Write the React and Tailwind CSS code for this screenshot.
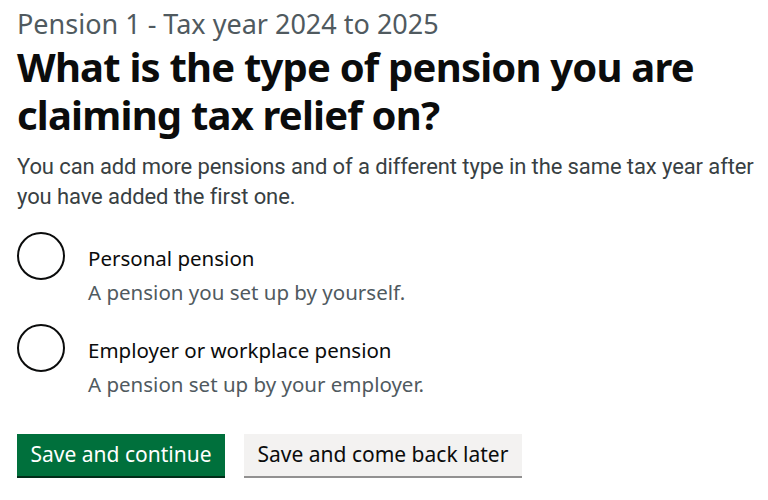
import React, { useState } from 'react';

const options = [
  { value: 'personal', label: 'Personal pension', hint: 'A pension you set up by yourself.' },
  { value: 'workplace', label: 'Employer or workplace pension', hint: 'A pension set up by your employer.' },
];

const App = () => {
  const [type, setType] = useState('');

  return (
    <div className="bg-white min-h-[500px] pl-[17px] pr-[8px] pt-[10px] text-[#0b0c0c] font-['Noto_Sans',sans-serif]">
      <span className="block text-[27px] leading-[28px] text-[#505a5f]">Pension 1 - Tax year 2024 to 2025</span>
      <h1 className="text-[40px] leading-[48px] font-bold tracking-[-0.8px] mt-[5px]">
        What is the type of pension you are claiming tax relief on?
      </h1>
      <p className="text-[22px] leading-[30px] text-[#383f43] mt-[13px] tracking-[-0.1px] font-['Roboto',sans-serif]">
        You can add more pensions and of a different type in the same tax year after you have added the first one.
      </p>

      <div className="mt-[20px] flex flex-col gap-[44px]">
        {options.map((o) => (
          <label key={o.value} className="flex gap-[23px] cursor-pointer">
            <input
              type="radio"
              name="type"
              value={o.value}
              checked={type === o.value}
              onChange={() => setType(o.value)}
              className="sr-only"
            />
            <span className="w-[48px] h-[48px] shrink-0 rounded-full border-2 border-[#0b0c0c] flex items-center justify-center">
              {type === o.value && <span className="w-[22px] h-[22px] rounded-full bg-[#0b0c0c]" />}
            </span>
            <span className="pt-[13px] h-[48px]">
              <span className="block text-[20.5px] leading-[26px]">{o.label}</span>
              <span className="block text-[20.5px] leading-[26px] text-[#505a5f] mt-[8px] whitespace-nowrap">{o.hint}</span>
            </span>
          </label>
        ))}
      </div>

      <div className="flex gap-[19px] mt-[62px]">
        <button className="h-[42px] px-[13.5px] bg-[#00703c] text-white text-[21px] shadow-[0_2px_0_#002d18]">
          Save and continue
        </button>
        <button className="h-[42px] px-[13.5px] bg-[#f3f2f1] text-[#0b0c0c] text-[21px] shadow-[0_2px_0_#929191]">
          Save and come back later
        </button>
      </div>
    </div>
  );
};

export default App;
